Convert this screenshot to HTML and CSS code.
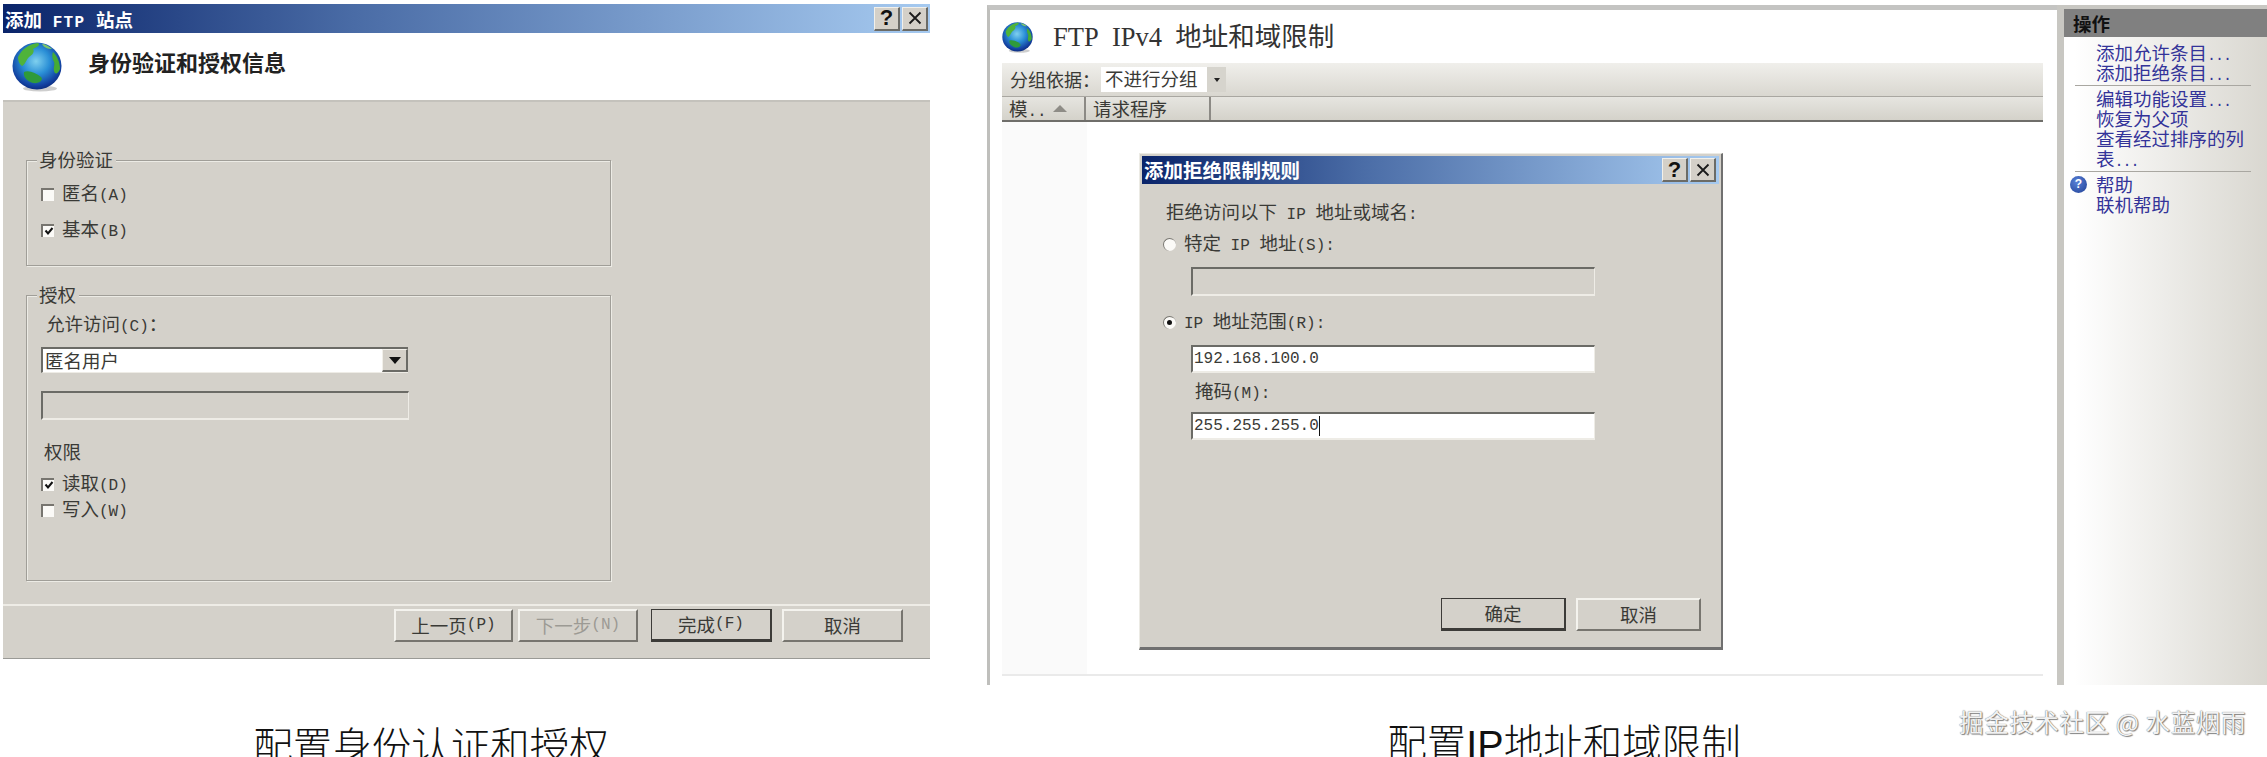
FILE: index.html
```html
<!DOCTYPE html>
<html lang="zh-CN">
<head>
<meta charset="utf-8">
<title>FTP 配置</title>
<link rel="stylesheet" href="styles.css">
</head>
<body>
<svg class="defs" width="0" height="0" aria-hidden="true">
  <defs>
    <radialGradient id="sea" cx="0.48" cy="0.4" r="0.62">
      <stop offset="0" stop-color="#7fd0ee"/>
      <stop offset="0.45" stop-color="#2a8fd6"/>
      <stop offset="0.85" stop-color="#123f9f"/>
      <stop offset="1" stop-color="#0b2a78"/>
    </radialGradient>
    <symbol id="globe" viewBox="0 0 50 50">
      <ellipse cx="28" cy="46.5" rx="17" ry="3" fill="#b9b9b9" opacity="0.7"/>
      <ellipse cx="25" cy="24" rx="24.5" ry="23.5" fill="url(#sea)"/>
      <path d="M6 15 C10 7 17 2 26 1 C29 3 25 5 21 7 C23 10 20 13 17 15 C14 18 13 23 10 24 C7 22 6 18 6 15 Z" fill="#4fb33a"/>
      <path d="M30 2 C33 2 37 4 40 7 C36 7 32 6 30 2 Z" fill="#7cc56a"/>
      <path d="M41 10 C45 14 48 20 48 27 C46 32 43 33 42 29 C41 24 44 22 41 18 C40 15 40 12 41 10 Z" fill="#45ab35"/>
      <path d="M12 30 C17 28 24 31 29 35 C32 38 27 42 21 41 C15 39 11 35 12 30 Z" fill="#2f9a3a"/>
    </symbol>
    <symbol id="tick" viewBox="0 0 10 10">
      <path d="M1.5 4.5 L4 7.5 L8.5 2" fill="none" stroke="#111" stroke-width="2"/>
    </symbol>
    <symbol id="close-x" viewBox="0 0 14 14">
      <path d="M1.5 1.5 L12.5 12.5 M12.5 1.5 L1.5 12.5" fill="none" stroke="#1a1a1a" stroke-width="1.8"/>
    </symbol>
  </defs>
</svg>

<main class="page">
  <figure class="fig fig-left">
    <section class="wizard">
      <header class="titlebar titlebar-wizard">
        <span class="title-text">添加<span class="l l-title"> FTP </span>站点</span>
        <span class="winbtns">
          <span class="winbtn winbtn-help">?</span>
          <span class="winbtn"><svg class="x-icon"><use href="#close-x"/></svg></span>
        </span>
      </header>
      <div class="wiz-head">
        <svg class="globe-lg"><use href="#globe"/></svg>
        <h1 class="wiz-heading">身份验证和授权信息</h1>
      </div>
      <div class="wiz-body">
        <div class="group group-auth">
          <span class="legend">身份验证</span>
          <div class="opt opt-tall"><span class="check"></span><span class="opt-text">匿名<span class="l">(A)</span></span></div>
          <div class="opt opt-tall"><span class="check"><svg class="tick"><use href="#tick"/></svg></span><span class="opt-text">基本<span class="l">(B)</span></span></div>
        </div>
        <div class="group group-authz">
          <span class="legend">授权</span>
          <div class="text-row indent-a">允许访问<span class="l">(C)</span>：</div>
          <div class="select">
            <span class="select-value">匿名用户</span>
            <span class="select-btn"><i class="arrow-down"></i></span>
          </div>
          <div class="input input-wizard"></div>
          <div class="text-row perm-title">权限</div>
          <div class="opt opt-first"><span class="check"><svg class="tick"><use href="#tick"/></svg></span><span class="opt-text">读取<span class="l">(D)</span></span></div>
          <div class="opt"><span class="check"></span><span class="opt-text">写入<span class="l">(W)</span></span></div>
        </div>
      </div>
      <footer class="wiz-foot">
        <span class="btn btn-wiz btn-prev">上一页<span class="l">(P)</span></span>
        <span class="btn btn-wiz btn-disabled btn-next">下一步<span class="l">(N)</span></span>
        <span class="btn btn-wiz btn-default btn-finish">完成<span class="l">(F)</span></span>
        <span class="btn btn-wiz btn-cancel">取消</span>
      </footer>
    </section>
    <figcaption class="caption caption-left">配置身份认证和授权</figcaption>
  </figure>

  <figure class="fig fig-right">
    <section class="console">
      <div class="panel">
        <div class="panel-head">
          <svg class="globe-sm"><use href="#globe"/></svg>
          <h2 class="panel-title">FTP&nbsp; IPv4&nbsp; 地址和域限制</h2>
        </div>
        <div class="list">
          <div class="toolbar">
            <span class="toolbar-label">分组依据：</span>
            <span class="toolbar-value">不进行分组</span>
            <span class="toolbar-drop"><i class="arrow-mini"></i></span>
          </div>
          <div class="columns">
            <span class="col col-mod">模<span class="l">..</span><i class="arrow-up"></i></span>
            <span class="col col-req">请求程序</span>
            <span class="col col-rest"></span>
          </div>
          <div class="rows"><div class="rows-sorted"></div></div>
        </div>

        <div class="dialog">
          <header class="titlebar titlebar-dialog">
            <span class="title-text title-dialog">添加拒绝限制规则</span>
            <span class="winbtns">
              <span class="winbtn winbtn-help">?</span>
              <span class="winbtn"><svg class="x-icon"><use href="#close-x"/></svg></span>
            </span>
          </header>
          <div class="dialog-body">
            <div class="text-row dlg-intro">拒绝访问以下<span class="l"> IP </span>地址或域名<span class="l">:</span></div>
            <div class="opt dlg-radio-first"><span class="radio"></span><span class="opt-text">特定<span class="l"> IP </span>地址<span class="l">(S):</span></span></div>
            <div class="input input-dlg input-first"></div>
            <div class="opt dlg-radio-second"><span class="radio radio-on"></span><span class="opt-text"><span class="l">IP </span>地址范围<span class="l">(R):</span></span></div>
            <div class="input input-dlg input-white input-first"><span class="l">192.168.100.0</span></div>
            <div class="text-row dlg-mask">掩码<span class="l">(M):</span></div>
            <div class="input input-dlg input-white input-last"><span class="l">255.255.255.0</span><i class="caret"></i></div>
            <div class="dlg-buttons">
              <span class="btn btn-dlg btn-default">确定</span>
              <span class="btn btn-dlg">取消</span>
            </div>
          </div>
        </div>
      </div>

      <aside class="actions">
        <div class="actions-head">操作</div>
        <div class="actions-list">
          <div class="link">添加允许条目<span class="l">...</span></div>
          <div class="link">添加拒绝条目<span class="l">...</span></div>
          <hr class="sep">
          <div class="link">编辑功能设置<span class="l">...</span></div>
          <div class="link">恢复为父项</div>
          <div class="link">查看经过排序的列表<span class="l">...</span></div>
          <hr class="sep">
          <div class="link link-help"><span class="help-icon">?</span>帮助</div>
          <div class="link">联机帮助</div>
        </div>
      </aside>
    </section>
    <figcaption class="caption caption-right">配置IP地址和域限制</figcaption>
  </figure>

  <div class="watermark">掘金技术社区 @ 水蓝烟雨</div>
</main>
</body>
</html>
```

FILE: styles.css
```css
* { box-sizing: border-box; }
html, body { margin: 0; padding: 0; height: 757px; overflow: hidden; background: #fff; }
body { font-family: "Noto Sans CJK SC", "Liberation Sans", sans-serif; font-size: 18.5px; color: #3a3a36; }
.defs { position: absolute; }

.page { position: relative; display: flex; align-items: flex-start; width: 2267px; height: 757px; overflow: hidden; }
.fig { margin: 0; flex: none; }
.fig-left { width: 930px; margin-left: 3px; padding-top: 4px; }
.fig-right { width: 1280px; margin-left: 54px; padding-top: 5px; }

.l { font-family: "Liberation Mono", monospace; font-size: 16px; line-height: 0; }

/* title bars */
.titlebar { display: flex; align-items: center; justify-content: space-between; background: linear-gradient(90deg, #0a246a 0%, #4a6ca6 38%, #a6caf0 100%); color: #fff; }
.title-text { font-weight: 700; line-height: 24px; }
.title-dialog { font-size: 19.5px; margin-left: -3px; }
.l-title { font-weight: 700; letter-spacing: 1.2px; }
.titlebar-wizard { height: 29px; padding: 0 2px 0 2px; }
.titlebar-dialog { height: 28px; padding: 0 3px 0 5px; }
.winbtns { display: flex; gap: 2px; }
.winbtn { display: flex; align-items: center; justify-content: center; width: 26px; height: 24px; background: #d4d0c8; border-top: 1px solid #f2f0ea; border-left: 1px solid #f2f0ea; border-right: 2px solid #6b6b66; border-bottom: 2px solid #6b6b66; }
.winbtn-help { font-family: "Liberation Sans", sans-serif; font-weight: 700; font-size: 22px; color: #111; }
.x-icon { width: 14px; height: 14px; }

/* wizard */
.wizard { display: flex; flex-direction: column; width: 927px; height: 655px; border-bottom: 1px solid #9a9a96; background: #d4d1ca; }
.wiz-head { display: flex; align-items: center; height: 69px; background: #fff; border-bottom: 2px solid #c4c2bc; padding-left: 9px; }
.globe-lg { width: 50px; height: 50px; flex: none; }
.wiz-heading { margin: 0 0 12px 26px; font-size: 22px; font-weight: 700; color: #222; line-height: 28px; }
.wiz-body { display: flex; flex-direction: column; height: 504px; padding: 58px 0 0 23px; border-bottom: 2px solid #eeece6; }
.group { position: relative; width: 585px; border: 1px solid #a09e98; box-shadow: 1px 1px 0 #ecebe5, inset 1px 1px 0 #ecebe5; }
.group-auth { height: 106px; padding: 15px 0 0 14px; }
.group-authz { height: 286px; margin-top: 29px; padding: 17px 0 0 14px; }
.legend { position: absolute; left: 10px; top: -14px; padding: 0 3px 0 2px; background: #d4d1ca; line-height: 25px; }

.opt { display: flex; align-items: center; gap: 8px; height: 26px; line-height: 26px; }
.opt-tall { height: 36px; }
.opt-first { margin-top: 6px; }
.opt-text { margin-top: -4px; }
.check { display: flex; align-items: center; justify-content: center; flex: none; width: 13px; height: 13px; background: #fbfaf7; border-top: 2px solid #77756f; border-left: 2px solid #77756f; }
.tick { width: 10px; height: 10px; }
.radio { position: relative; flex: none; width: 13px; height: 13px; border-radius: 50%; background: #fbfaf7; border-top: 1.5px solid #77756f; border-left: 1.5px solid #77756f; }
.radio-on::after { content: ""; position: absolute; left: 3px; top: 3px; width: 5px; height: 5px; border-radius: 50%; background: #111; }

.text-row { height: 24px; line-height: 21px; }
.indent-a { margin-left: 5px; }
.perm-title { margin-top: 21px; margin-left: 3px; }

.select { display: flex; width: 367px; height: 26px; margin-top: 10px; background: #fff; border-top: 2px solid #6b6b66; border-left: 2px solid #6b6b66; border-bottom: 1px solid #eeece6; }
.select-value { flex: 1; line-height: 23px; padding-left: 2px; }
.select-btn { display: flex; align-items: center; justify-content: center; width: 26px; background: #d4d0c8; border-top: 1px solid #f2f0ea; border-left: 1px solid #f2f0ea; border-right: 2px solid #6b6b66; border-bottom: 2px solid #6b6b66; }
.arrow-down { width: 0; height: 0; border-left: 6px solid transparent; border-right: 6px solid transparent; border-top: 7px solid #111; }

.input { background: #d4d1ca; border-top: 2px solid #6b6b66; border-left: 2px solid #6b6b66; border-right: 1px solid #eeece6; border-bottom: 2px solid #eeece6; }
.input-wizard { width: 368px; height: 29px; margin-top: 18px; }
.input-dlg { display: flex; align-items: center; width: 404px; margin-left: 25px; padding-left: 1px; }
.input-white { background: #fff; height: 28px; }
.input-first { margin-top: 11px; }
.input-dlg:not(.input-white) { height: 29px; }
.input-last { margin-top: 8px; }
.caret { width: 1px; height: 20px; background: #111; }

/* buttons */
.btn { display: flex; align-items: center; justify-content: center; padding-bottom: 2px; background: #d4d1ca; border-top: 2px solid #f4f3ee; border-left: 2px solid #f4f3ee; border-right: 2px solid #77756f; border-bottom: 2px solid #77756f; }
.btn-default { border: 2px solid #3c3b38; border-bottom-width: 3px; border-top-width: 1px; border-left-width: 1px; }
.btn-disabled { color: #9c9a94; }
.btn-wiz { width: 121px; height: 33px; }
.btn-prev { width: 119px; }
.btn-next { width: 120px; margin-left: 5px; }
.btn-finish { margin-left: 13px; }
.btn-cancel { margin-left: 10px; }
.btn-dlg { width: 125px; height: 33px; }
.wiz-foot { display: flex; justify-content: flex-end; flex: 1; padding: 3px 27px 0 0; }

/* console */
.console { display: flex; width: 1280px; height: 680px; background: #c8c7c2; }
.panel { position: relative; width: 1070px; height: 680px; border-top: 5px solid #c4c4c2; border-left: 3px solid #bfbfbc; background: #fff; padding: 0 14px 0 12px; }
.panel-head { display: flex; align-items: center; height: 53px; }
.globe-sm { width: 31px; height: 33px; flex: none; margin-top: 2px; }
.panel-title { margin: 0 0 0 20px; font-family: "Liberation Serif", "Noto Sans CJK SC", serif; font-size: 26.5px; font-weight: 400; line-height: 34px; color: #333; }

.list { display: flex; flex-direction: column; height: 613px; border-bottom: 2px solid #eaeaea; }
.toolbar { display: flex; align-items: center; height: 33px; padding-left: 8px; background: linear-gradient(180deg, #f0efeb, #d9d7d0); }
.toolbar-label { flex: none; width: 91px; white-space: nowrap; font-size: 18px; line-height: 22px; margin-top: -2px; }
.toolbar-value { width: 106px; height: 25px; line-height: 23px; padding-left: 4px; background: #fff; }
.toolbar-drop { display: flex; align-items: center; justify-content: center; width: 19px; height: 25px; background: #d6d4cd; }
.arrow-mini { width: 0; height: 0; border-left: 3px solid transparent; border-right: 3px solid transparent; border-top: 4px solid #222; }
.columns { display: flex; height: 26px; background: linear-gradient(180deg, #e6e5e0, #d4d2ca); border-top: 1px solid #a9a7a1; border-bottom: 2px solid #6f6e6a; }
.col { display: block; line-height: 22px; }
.col-mod { position: relative; width: 84px; padding-left: 7px; border-right: 2px solid #8c8a85; }
.col-req { width: 125px; padding-left: 7px; border-right: 2px solid #8c8a85; }
.col-rest { flex: 1; }
.arrow-up { position: absolute; left: 51px; top: 8px; width: 0; height: 0; border-left: 7px solid transparent; border-right: 7px solid transparent; border-bottom: 7px solid #8e8c86; }
.rows { flex: 1; }
.rows-sorted { width: 85px; height: 100%; background: #fafafa; }

/* dialog over the list */
.dialog { position: absolute; left: 149px; top: 143px; display: flex; flex-direction: column; width: 584px; height: 497px; padding: 2px 2px 0 2px; background: #d4d1ca; border-top: 1px solid #ecebe5; border-left: 1px solid #ecebe5; border-right: 2px solid #707070; border-bottom: 3px solid #707070; }
.dialog-body { padding: 17px 18px 0 24px; }
.dlg-intro { margin-left: 0; }
.dlg-radio-first { height: 24px; margin-top: 7px; margin-left: -3px; }
.dlg-radio-second { height: 24px; margin-top: 14px; margin-left: -3px; }
.dlg-mask { margin: 7px 0 0 29px; }
.dlg-buttons { display: flex; justify-content: flex-end; gap: 10px; margin-top: 158px; }

/* actions pane */
.actions { width: 203px; margin: 4px 0 0 7px; background: linear-gradient(90deg, #ffffff 5%, #d9d7d0 100%); overflow: hidden; flex: none; }
.actions-head { height: 28px; line-height: 28px; padding-left: 9px; background: #808080; color: #111; font-weight: 700; }
.actions-list { padding: 5px 16px 0 32px; }
.link { position: relative; line-height: 20.3px; color: #333399; }
.link .l { letter-spacing: -1px; font-size: 15px; }
.sep { height: 1px; margin: 2px 0 2px -21px; border: 0; background: #a9a7a1; }
.help-icon { position: absolute; left: -26px; top: 2px; display: flex; align-items: center; justify-content: center; width: 17px; height: 17px; border-radius: 50%; background: radial-gradient(circle at 40% 35%, #5a82d8, #1f3f94); color: #fff; font-family: "Liberation Sans", sans-serif; font-size: 12px; font-weight: 700; }

/* captions */
.caption { font-size: 39.5px; font-weight: 300; line-height: 46px; color: #111; text-align: center; white-space: nowrap; }
.caption-left { margin-top: 62px; padding-right: 74px; }
.caption-right { margin-top: 36px; padding-right: 126px; font-family: "Liberation Sans", "Noto Sans CJK SC", sans-serif; }

.watermark { position: absolute; right: 21px; top: 704px; font-size: 24.5px; line-height: 36px; letter-spacing: 0.6px; color: #f2f2f2; text-shadow: 0 0 1px #555, 1px 1px 1px #888; }
```
